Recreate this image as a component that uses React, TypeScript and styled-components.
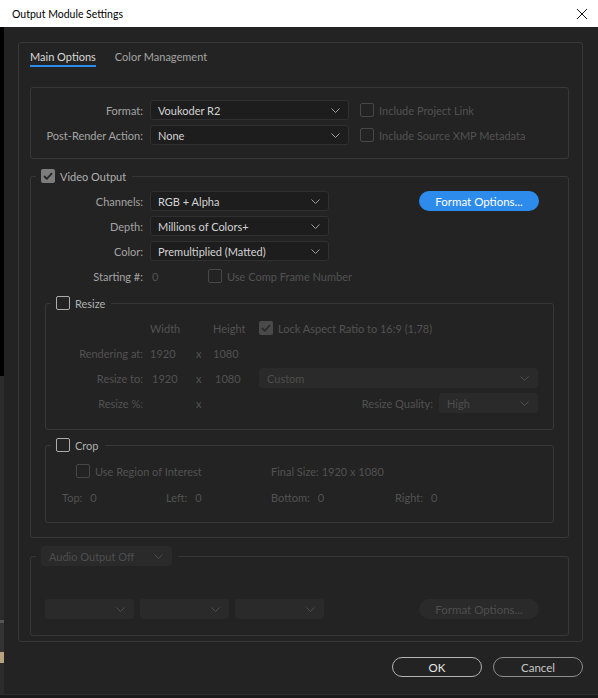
import React from 'react';
import styled, { createGlobalStyle } from 'styled-components';

const GlobalStyle = createGlobalStyle`
  html, body {
    margin: 0;
    padding: 0;
    background: #232323;
  }
  body {
    font-family: Lato, "Open Sans", "Noto Sans", sans-serif;
    font-size: 11px;
    color: #a6a6a6;
  }
  * { box-sizing: border-box; }
`;

const Window = styled.div`
  width: 598px;
  height: 698px;
  display: flex;
  flex-direction: column;
  background: #232323;
  overflow: hidden;
`;

const TitleBar = styled.div`
  height: 27px;
  flex: none;
  display: flex;
  align-items: center;
  justify-content: space-between;
  padding: 0 10px 0 12px;
  background: #ffffff;
  color: #000;
  font-family: Lato, "Noto Sans", sans-serif;
  font-size: 10.5px;
`;

const CloseButton = styled.span`
  width: 12px;
  height: 12px;
  display: flex;
`;

const Frame = styled.div`
  flex: 1;
  display: flex;
  min-height: 0;
`;

// part of the window behind the dialog, visible on the left edge
const BackdropEdge = styled.div`
  width: 4px;
  flex: none;
  background: linear-gradient(
    to bottom,
    #000 0,
    #000 349px,
    #2c2c2c 349px,
    #2c2c2c 593px,
    #555 593px,
    #555 596px,
    #333 596px,
    #333 625px,
    #b9a27e 625px,
    #b9a27e 636px,
    #2c2c2c 636px
  );
`;

const Body = styled.div`
  flex: 1;
  display: flex;
  flex-direction: column;
  padding: 15px 15px 0 14px;
`;

const BottomEdge = styled.div`
  height: 4px;
  flex: none;
  background: #1a1a1a;
  border-top: 1px solid #2e2e2e;
`;

const Panel = styled.div`
  border: 1px solid #383838;
  border-radius: 3px;
  padding: 0 13px 5px 11px;
  display: flex;
  flex-direction: column;
`;

const TabList = styled.div`
  display: flex;
  gap: 19px;
  padding-top: 6px;
  margin-bottom: 20px;
`;

const Tab = styled.div<{ $active?: boolean }>`
  line-height: 16px;
  border-bottom: 2px solid ${p => (p.$active ? '#2d8ceb' : 'transparent')};
  color: ${p => (p.$active ? '#dadada' : '#a3a3a3')};
`;

const Box = styled.div`
  border: 1px solid #383838;
  border-radius: 3px;
  padding: 12px 0 13px 0;
  display: flex;
  flex-direction: column;
  gap: 5px;
`;

const Group = styled.fieldset<{ $pad: string; $mt?: number }>`
  margin: ${p => p.$mt ?? 10}px 0 0 0;
  padding: ${p => p.$pad};
  min-width: 0;
  border: 1px solid #383838;
  border-radius: 3px;
`;

const Legend = styled.legend`
  margin-left: 5px;
  padding: 0 6px 0 5px;
  height: 14px;
  display: flex;
  align-items: center;
  gap: 5px;
`;

const Row = styled.div<{ $gap?: number; $indent?: number }>`
  display: flex;
  align-items: center;
  height: 20px;
  gap: ${p => p.$gap ?? 0}px;
  padding-left: ${p => p.$indent ?? 0}px;
`;

const FieldLabel = styled.span<{ $width: number; $dim?: boolean }>`
  width: ${p => p.$width}px;
  flex: none;
  text-align: right;
  padding-right: 7px;
  white-space: nowrap;
  color: ${p => (p.$dim ? '#525252' : '#a3a3a3')};
`;

const Text = styled.span<{ $tone?: 'value' | 'label' | 'dim' | 'legend'; $width?: number; $indent?: number }>`
  white-space: nowrap;
  ${p => (p.$width ? `width: ${p.$width}px; flex: none;` : '')}
  padding-left: ${p => p.$indent ?? 0}px;
  color: ${p =>
    p.$tone === 'value'
      ? '#d4d4d4'
      : p.$tone === 'dim'
      ? '#525252'
      : p.$tone === 'legend'
      ? '#b0b0b0'
      : '#a3a3a3'};
`;

const SelectBox = styled.div<{ $width?: number; $disabled?: boolean; $fill?: boolean }>`
  ${p => (p.$fill ? 'flex: 1;' : `width: ${p.$width}px; flex: none;`)}
  height: 20px;
  display: flex;
  align-items: center;
  justify-content: space-between;
  padding: 0 8px 0 7px;
  border-radius: 3px;
  background: ${p => (p.$disabled ? '#2a2a2a' : '#1d1d1d')};
  border: 1px solid ${p => (p.$disabled ? '#2a2a2a' : '#303030')};
  color: ${p => (p.$disabled ? '#4e4e4e' : '#d4d4d4')};
  white-space: nowrap;
`;

const Chevron = ({ color }: { color: string }) => (
  <svg width="9" height="5" viewBox="0 0 9 5" fill="none">
    <path d="M0.5 0.5 L4.5 4.5 L8.5 0.5" stroke={color} strokeWidth="1" />
  </svg>
);

const Select = ({
  value,
  width,
  disabled,
  fill,
}: {
  value?: string;
  width?: number;
  disabled?: boolean;
  fill?: boolean;
}) => (
  <SelectBox $width={width} $disabled={disabled} $fill={fill}>
    <span>{value}</span>
    <Chevron color={disabled ? '#4e4e4e' : '#a0a0a0'} />
  </SelectBox>
);

const CheckBox = styled.span<{ $checked?: boolean; $disabled?: boolean }>`
  width: 14px;
  height: 14px;
  flex: none;
  display: flex;
  align-items: center;
  justify-content: center;
  border-radius: 2px;
  background: ${p => (p.$checked ? (p.$disabled ? '#4a4a4a' : '#7d7d7d') : 'transparent')};
  border: ${p =>
    p.$checked ? 'none' : `1.5px solid ${p.$disabled ? '#474747' : '#acacac'}`};
`;

const Check = ({
  checked,
  disabled,
}: {
  checked?: boolean;
  disabled?: boolean;
}) => (
  <CheckBox $checked={checked} $disabled={disabled}>
    {checked && (
      <svg width="10" height="8" viewBox="0 0 10 8" fill="none">
        <path
          d="M1 4 L3.8 6.8 L9 1.2"
          stroke={disabled ? '#2b2b2b' : '#262626'}
          strokeWidth="1.8"
        />
      </svg>
    )}
  </CheckBox>
);

const CheckItem = styled.label<{ $offset?: number }>`
  display: flex;
  align-items: center;
  gap: 5px;
  margin-left: ${p => p.$offset ?? 0}px;
`;

const PillButton = styled.button<{ $variant: 'primary' | 'disabled' | 'outline' | 'secondary'; $width: number; $offset?: number }>`
  width: ${p => p.$width}px;
  height: 20px;
  flex: none;
  margin-left: ${p => p.$offset ?? 0}px;
  border-radius: 10px;
  font: inherit;
  font-size: 11.5px;
  padding: 0;
  cursor: default;
  background: ${p =>
    p.$variant === 'primary' ? '#2d8ceb' : p.$variant === 'disabled' ? '#2a2a2a' : 'transparent'};
  color: ${p =>
    p.$variant === 'primary'
      ? '#ffffff'
      : p.$variant === 'disabled'
      ? '#4e4e4e'
      : p.$variant === 'secondary'
      ? '#c8c8c8'
      : '#e6e6e6'};
  border: ${p =>
    p.$variant === 'outline'
      ? '1.5px solid #b4b4b4'
      : p.$variant === 'secondary'
      ? '1.5px solid #8e8e8e'
      : 'none'};
`;

const GroupContent = styled.div<{ $gap: number }>`
  display: flex;
  flex-direction: column;
  gap: ${p => p.$gap}px;
`;

// nested groups inside Video Output are indented from its left border
const GroupWrap = styled.div`
  padding-left: 14px;
`;

const ResizeGrid = styled.div`
  display: grid;
  grid-template-columns: 104px 46px 17px 46px 1fr;
  grid-auto-rows: 20px;
  row-gap: 5px;
  align-items: center;
`;

const QualityCell = styled.div`
  display: flex;
  align-items: center;
  justify-content: flex-end;
  gap: 6px;
`;

const CropCell = styled.div<{ $width: number }>`
  width: ${p => p.$width}px;
  flex: none;
  display: flex;
  align-items: center;
  gap: 8px;
`;

const Footer = styled.div`
  display: flex;
  justify-content: flex-end;
  gap: 11px;
  margin-top: 15px;
`;

const App: React.FC = () => {
  return (
    <>
      <GlobalStyle />
      <Window>
        <TitleBar>
          <span>Output Module Settings</span>
          <CloseButton>
            <svg width="12" height="12" viewBox="0 0 12 12">
              <path d="M1 1 L11 11 M11 1 L1 11" stroke="#111" strokeWidth="1" />
            </svg>
          </CloseButton>
        </TitleBar>
        <Frame>
          <BackdropEdge />
          <Body>
            <Panel>
              <TabList>
                <Tab $active>Main Options</Tab>
                <Tab>Color Management</Tab>
              </TabList>

              <Box>
                <Row>
                  <FieldLabel $width={119}>Format:</FieldLabel>
                  <Select value="Voukoder R2" width={199} />
                  <CheckItem $offset={11}>
                    <Check disabled />
                    <Text $tone="dim">Include Project Link</Text>
                  </CheckItem>
                </Row>
                <Row>
                  <FieldLabel $width={119}>Post-Render Action:</FieldLabel>
                  <Select value="None" width={199} />
                  <CheckItem $offset={11}>
                    <Check disabled />
                    <Text $tone="dim">Include Source XMP Metadata</Text>
                  </CheckItem>
                </Row>
              </Box>

              <Group $pad="8px 14px 14px 0" $mt={10}>
                <Legend>
                  <Check checked />
                  <Text $tone="legend">Video Output</Text>
                </Legend>
                <GroupContent $gap={5}>
                  <Row>
                    <FieldLabel $width={119}>Channels:</FieldLabel>
                    <Select value="RGB + Alpha" width={179} />
                    <PillButton $variant="primary" $width={120} $offset={90}>
                      Format Options...
                    </PillButton>
                  </Row>
                  <Row>
                    <FieldLabel $width={119}>Depth:</FieldLabel>
                    <Select value="Millions of Colors+" width={179} />
                  </Row>
                  <Row>
                    <FieldLabel $width={119}>Color:</FieldLabel>
                    <Select value="Premultiplied (Matted)" width={179} />
                  </Row>
                  <Row>
                    <FieldLabel $width={119}>Starting #:</FieldLabel>
                    <Text $tone="dim" $width={58} $indent={2}>0</Text>
                    <CheckItem>
                      <Check disabled />
                      <Text $tone="dim">Use Comp Frame Number</Text>
                    </CheckItem>
                  </Row>
                </GroupContent>

                <GroupWrap>
                  <Group $pad="8px 15px 16px 0" $mt={10}>
                    <Legend>
                      <Check />
                      <Text $tone="legend">Resize</Text>
                    </Legend>
                    <ResizeGrid>
                      <span />
                      <Text $tone="dim">Width</Text>
                      <span />
                      <Text $tone="dim">Height</Text>
                      <CheckItem>
                        <Check checked disabled />
                        <Text $tone="dim">Lock Aspect Ratio to 16:9 (1,78)</Text>
                      </CheckItem>

                      <FieldLabel $width={104} $dim>Rendering at:</FieldLabel>
                      <Text $tone="dim">1920</Text>
                      <Text $tone="dim">x</Text>
                      <Text $tone="dim">1080</Text>
                      <span />

                      <FieldLabel $width={104} $dim>Resize to:</FieldLabel>
                      <Text $tone="dim" $indent={2}>1920</Text>
                      <Text $tone="dim">x</Text>
                      <Text $tone="dim" $indent={2}>1080</Text>
                      <Select value="Custom" disabled fill />

                      <FieldLabel $width={104} $dim>Resize %:</FieldLabel>
                      <span />
                      <Text $tone="dim">x</Text>
                      <span />
                      <QualityCell>
                        <Text $tone="dim">Resize Quality:</Text>
                        <Select value="High" width={99} disabled />
                      </QualityCell>
                    </ResizeGrid>
                  </Group>

                  <Group $pad="9px 15px 15px 0" $mt={8}>
                    <Legend>
                      <Check />
                      <Text $tone="legend">Crop</Text>
                    </Legend>
                    <GroupContent $gap={6}>
                      <Row>
                        <CropCell $width={225}>
                          <CheckItem $offset={30}>
                            <Check disabled />
                            <Text $tone="dim">Use Region of Interest</Text>
                          </CheckItem>
                        </CropCell>
                        <Text $tone="dim">Final Size: 1920 x 1080</Text>
                      </Row>
                      <Row>
                        <CropCell $width={120}>
                          <Text $tone="dim" $indent={16}>Top:</Text>
                          <Text $tone="dim">0</Text>
                        </CropCell>
                        <CropCell $width={105}>
                          <Text $tone="dim">Left:</Text>
                          <Text $tone="dim">0</Text>
                        </CropCell>
                        <CropCell $width={124}>
                          <Text $tone="dim">Bottom:</Text>
                          <Text $tone="dim">0</Text>
                        </CropCell>
                        <CropCell $width={80}>
                          <Text $tone="dim">Right:</Text>
                          <Text $tone="dim">0</Text>
                        </CropCell>
                      </Row>
                    </GroupContent>
                  </Group>
                </GroupWrap>
              </Group>

              <Group $pad="36px 14px 16px 0" $mt={11}>
                <Legend>
                  <Select value="Audio Output Off" width={131} disabled />
                </Legend>
                <Row $gap={6} $indent={14}>
                  <Select width={89} disabled />
                  <Select width={89} disabled />
                  <Select width={89} disabled />
                  <PillButton $variant="disabled" $width={120} $offset={89}>
                    Format Options...
                  </PillButton>
                </Row>
              </Group>
            </Panel>

            <Footer>
              <PillButton $variant="outline" $width={90}>OK</PillButton>
              <PillButton $variant="secondary" $width={90}>Cancel</PillButton>
            </Footer>
          </Body>
        </Frame>
        <BottomEdge />
      </Window>
    </>
  );
};

export default App;
